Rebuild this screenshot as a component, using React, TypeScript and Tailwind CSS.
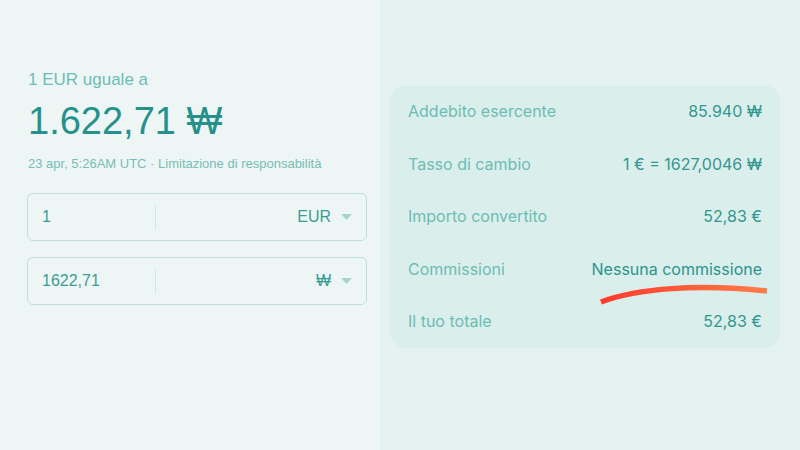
import React from "react";

const Caret = () => (
  <svg width="11" height="6" viewBox="0 0 11 6" className="ml-[10px]">
    <path d="M0 0 L11 0 L5.5 6 Z" fill="#a9d3cf" />
  </svg>
);

const Row = ({ label, value, strong }: { label: string; value: string; strong?: boolean }) => (
  <div className="flex h-[52.5px] items-center justify-between">
    <span className="text-[16px] text-[#6dbcb4]">{label}</span>
    <span className={"text-[16px] " + (strong ? "text-[#2a948c]" : "text-[#33978f]")}>{value}</span>
  </div>
);

export default function App() {
  return (
    <div className="flex h-[450px] w-[800px] overflow-hidden" style={{ fontFamily: "'Liberation Sans', Arial, sans-serif" }}>
      <div className="flex w-[380px] flex-col bg-[#eef6f5] pl-[27px] pr-[13px] pt-[70px]">
        <div className="pl-[1px] text-[17px] leading-[20px] text-[#6cbdb5]">1 EUR uguale a</div>
        <div className="mt-[8px] pl-[1px] text-[38px] leading-[46px] text-[#25918a]">1.622,71 ₩</div>
        <div className="mt-[12px] pl-[1px] text-[13px] leading-[16px] text-[#76bdb6]">
          23 apr, 5:26AM UTC · Limitazione di responsabilità
        </div>
        <div className="mt-[21px] flex h-[48px] items-center rounded-[6px] border border-[#bcdeda] px-[14px]">
          <span className="w-[113px] text-[16px] text-[#3a9d95]">1</span>
          <div className="h-[26px] w-px bg-[#d3e8e5]" />
          <div className="flex flex-1 items-center justify-end">
            <span className="text-[16px] text-[#3a9d95]">EUR</span>
            <Caret />
          </div>
        </div>
        <div className="mt-[16px] flex h-[48px] items-center rounded-[6px] border border-[#bcdeda] px-[14px]">
          <span className="w-[113px] text-[16px] text-[#3a9d95]">1622,71</span>
          <div className="h-[26px] w-px bg-[#d3e8e5]" />
          <div className="flex flex-1 items-center justify-end">
            <span className="text-[16px] text-[#3a9d95]">₩</span>
            <Caret />
          </div>
        </div>
      </div>
      <div className="flex-1 bg-[#e4f2f0] pl-[10px] pr-[20px] pt-[85px]" style={{ fontFamily: "Inter, 'Noto Sans', sans-serif" }}>
        <div className="relative rounded-[16px] bg-[#daeeec] px-[18px]">
          <Row label="Addebito esercente" value="85.940 ₩" />
          <Row label="Tasso di cambio" value="1 € = 1627,0046 ₩" />
          <Row label="Importo convertito" value="52,83 €" />
          <Row label="Commissioni" value="Nessuna commissione" strong />
          <Row label="Il tuo totale" value="52,83 €" />
          <svg className="absolute left-[208px] top-[197px]" width="172" height="26" viewBox="0 0 172 26">
            <defs>
              <linearGradient id="sw" x1="0" y1="0" x2="1" y2="0">
                <stop offset="0" stopColor="#ff3a2c" />
                <stop offset="1" stopColor="#ff7d48" />
              </linearGradient>
            </defs>
            <path d="M3 20 C 40 6, 100 2, 169 9" stroke="url(#sw)" strokeWidth="5.5" fill="none" />
          </svg>
        </div>
      </div>
    </div>
  );
}
